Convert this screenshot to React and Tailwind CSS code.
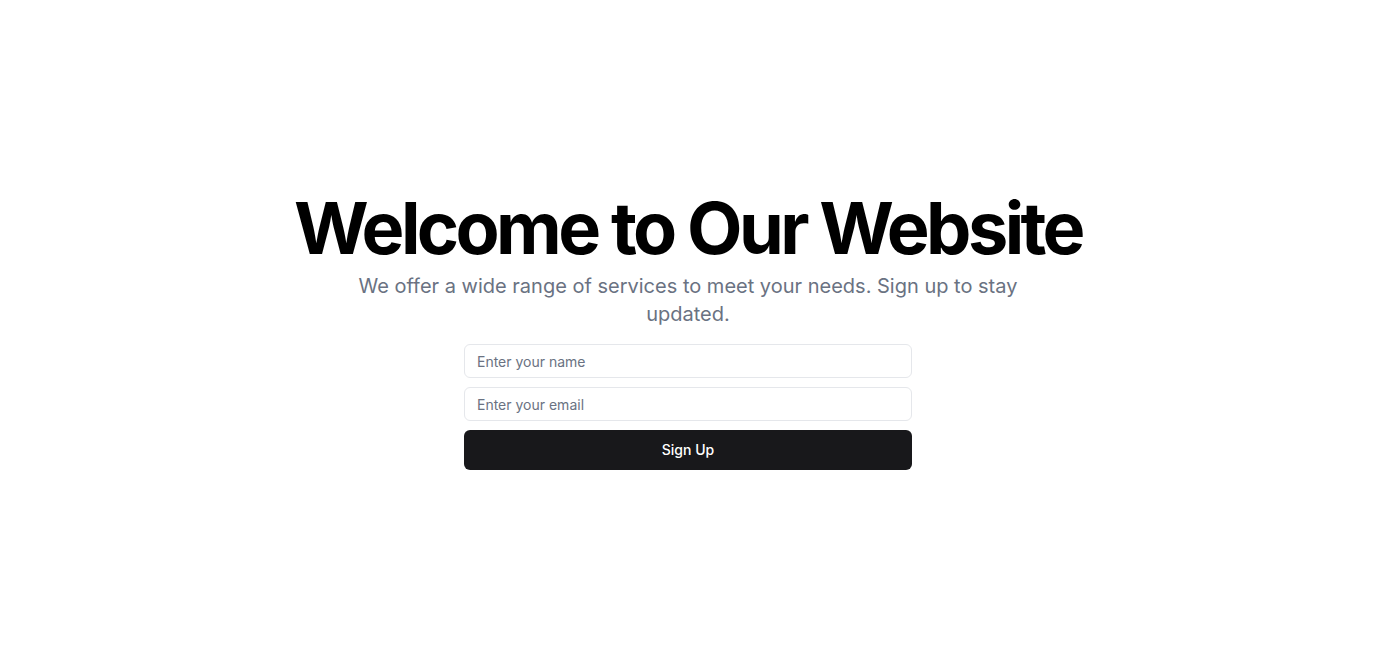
export default function App() {
  return (
    <div
      className="min-h-screen w-full bg-white flex items-center justify-center px-4"
      style={{ fontFamily: "Inter, 'Noto Sans', sans-serif" }}
    >
      <div className="flex flex-col items-center text-center">
        <div className="space-y-2 flex flex-col items-center">
          <h1 className="text-7xl font-bold tracking-tighter text-black leading-none">
            Welcome to Our Website
          </h1>
          <p className="max-w-[700px] text-xl text-gray-500">
            We offer a wide range of services to meet your needs. Sign up to stay updated.
          </p>
        </div>
        <form className="w-full max-w-md mt-4 flex flex-col gap-[9px]">
          <input
            type="text"
            placeholder="Enter your name"
            className="h-[34px] w-full rounded-md border border-gray-200 bg-white px-3 text-sm text-gray-900 placeholder:text-gray-500 outline-none"
          />
          <input
            type="email"
            placeholder="Enter your email"
            className="h-[34px] w-full rounded-md border border-gray-200 bg-white px-3 text-sm text-gray-900 placeholder:text-gray-500 outline-none"
          />
          <button
            type="submit"
            className="h-10 w-full rounded-md bg-zinc-900 text-sm font-medium text-white"
          >
            Sign Up
          </button>
        </form>
      </div>
    </div>
  );
}
